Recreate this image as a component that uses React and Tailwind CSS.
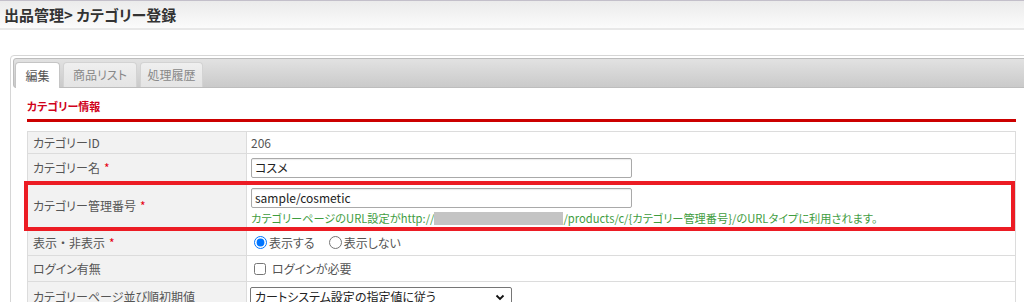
import { useState } from "react";

const Star = () => <span className="text-[#e60012] ml-[4px]">*</span>;

const Row = ({ label, required, className = "h-[26px]", children }) => (
  <div className={`flex border-b border-[#dcdcdc] ${className}`}>
    <div className="w-[219px] shrink-0 flex items-center pl-[5px] bg-[#f2f2f2] border-r border-[#dcdcdc]">
      {label}
      {required && <Star />}
    </div>
    <div className="flex-1 flex items-center pl-[4px]">{children}</div>
  </div>
);

const TextBox = ({ value }) => (
  <div className="w-[381px] h-[20px] flex items-center px-[3px] border border-[#a9a9a9] rounded-[2px] bg-white text-[#222] shadow-[inset_0_1px_1px_rgba(0,0,0,0.08)]">
    {value}
  </div>
);

export default function App() {
  const [visible, setVisible] = useState("show");
  const [login, setLogin] = useState(false);

  return (
    <div className="w-[1024px] h-[302px] overflow-hidden bg-white font-['Noto_Sans_CJK_JP',sans-serif] [font-feature-settings:'palt'] text-[12px] text-[#555]">
      <div className="h-[30px] border-t border-[#c3bfca] border-b-2 border-b-[#e8e8e8] bg-gradient-to-b from-[#ebebeb] to-[#fbfbfb] flex items-center pl-[4px]">
        <h1 className="text-[15px] font-bold text-[#333] leading-none">
          出品管理&gt; カテゴリー登録
        </h1>
      </div>

      <div className="ml-[10px] mt-[25px] w-[1024px] border border-[#d6d6d6] rounded-tl-[4px] p-[2px] pb-0">
        <div className="h-[30px] border border-[#bdbdbd] rounded-[3px] bg-gradient-to-b from-[#e2e2e2] to-[#cacaca] flex items-end pl-[1px] gap-[3px]">
          <div className="h-[26px] w-[45px] -mb-px flex items-center justify-center bg-white border border-b-0 border-[#c5c5c5] rounded-t-[4px] text-[#555]">
            編集
          </div>
          <div className="h-[25px] w-[74px] flex items-center justify-center bg-gradient-to-b from-[#efefef] to-[#e4e4e4] border border-b-0 border-[#d3d3d3] rounded-t-[4px] text-[#888]">
            商品リスト
          </div>
          <div className="h-[25px] w-[63px] flex items-center justify-center bg-gradient-to-b from-[#efefef] to-[#e4e4e4] border border-b-0 border-[#d3d3d3] rounded-t-[4px] text-[#888]">
            処理履歴
          </div>
        </div>

        <div className="pl-[14px] pt-[11px] w-[1003px]">
          <h2 className="text-[11px] font-bold text-[#d0021b] leading-[14px]">
            カテゴリー情報
          </h2>
          <div className="mt-[6px] h-[3px] bg-[#cc0000]" />

          <div className="mt-[9px] border-t border-x border-[#dcdcdc] w-[989px]">
            <Row label="カテゴリーID" className="h-[22px]">
              206
            </Row>
            <Row label="カテゴリー名" required className="h-[29px]">
              <TextBox value="コスメ" />
            </Row>
            <div className="relative">
              <div className="flex border-b border-[#dcdcdc] h-[47px]">
                <div className="w-[219px] shrink-0 flex items-center pl-[5px] bg-[#f2f2f2] border-r border-[#dcdcdc]">
                  カテゴリー管理番号
                  <Star />
                </div>
                <div className="flex-1 flex flex-col pl-[4px] pt-[5px]">
                  <TextBox value="sample/cosmetic" />
                  <div className="mt-[3px] flex items-center text-[11.2px] text-[#3f9d3f] leading-[14px] whitespace-nowrap">
                    カテゴリーページのURL設定がhttp://
                    <span className="inline-block w-[129px] h-[13px] bg-[#c4c4c4]" />
                    /products/c/{"{"}カテゴリー管理番号{"}"}/のURLタイプに利用されます。
                  </div>
                </div>
              </div>
              <div className="absolute -left-[4px] right-0 -top-[2px] -bottom-[1px] border-4 border-[#ec1c24] pointer-events-none" />
            </div>
            <Row
              label={
                <>
                  表示<span className="[font-feature-settings:normal]">・</span>非表示
                </>
              }
              required
              className="h-[26px]"
            >
              <label className="flex items-center ml-[3px]">
                <input
                  type="radio"
                  name="visible"
                  className="m-0 w-[13px] h-[13px]"
                  checked={visible === "show"}
                  onChange={() => setVisible("show")}
                />
                <span className="ml-[2px]">表示する</span>
              </label>
              <label className="flex items-center ml-[14px]">
                <input
                  type="radio"
                  name="visible"
                  className="m-0 w-[13px] h-[13px]"
                  checked={visible === "hide"}
                  onChange={() => setVisible("hide")}
                />
                <span className="ml-[2px]">表示しない</span>
              </label>
            </Row>
            <Row label="ログイン有無" className="h-[26px]">
              <label className="flex items-center ml-[3px]">
                <input
                  type="checkbox"
                  className="m-0 w-[12px] h-[12px]"
                  checked={login}
                  onChange={(e) => setLogin(e.target.checked)}
                />
                <span className="ml-[6px]">ログインが必要</span>
              </label>
            </Row>
            <div className="flex border-b border-[#dcdcdc] h-[30px]">
              <div className="w-[219px] shrink-0 flex items-center pl-[5px] bg-[#f2f2f2] border-r border-[#dcdcdc]">
                カテゴリーページ並び順初期値
              </div>
              <div className="flex-1 flex items-start pl-[3px] pt-[5px]">
                <div className="w-[262px] h-[20px] flex items-center justify-between pl-[4px] pr-[6px] border border-[#767676] rounded-[2px] bg-white text-[#222]">
                  カートシステム設定の指定値に従う
                  <svg width="10" height="10" viewBox="0 0 10 10">
                    <path d="M1.5 3.5 L5 7 L8.5 3.5" fill="none" stroke="#111" strokeWidth="1.8" />
                  </svg>
                </div>
              </div>
            </div>
          </div>
        </div>
      </div>
    </div>
  );
}
